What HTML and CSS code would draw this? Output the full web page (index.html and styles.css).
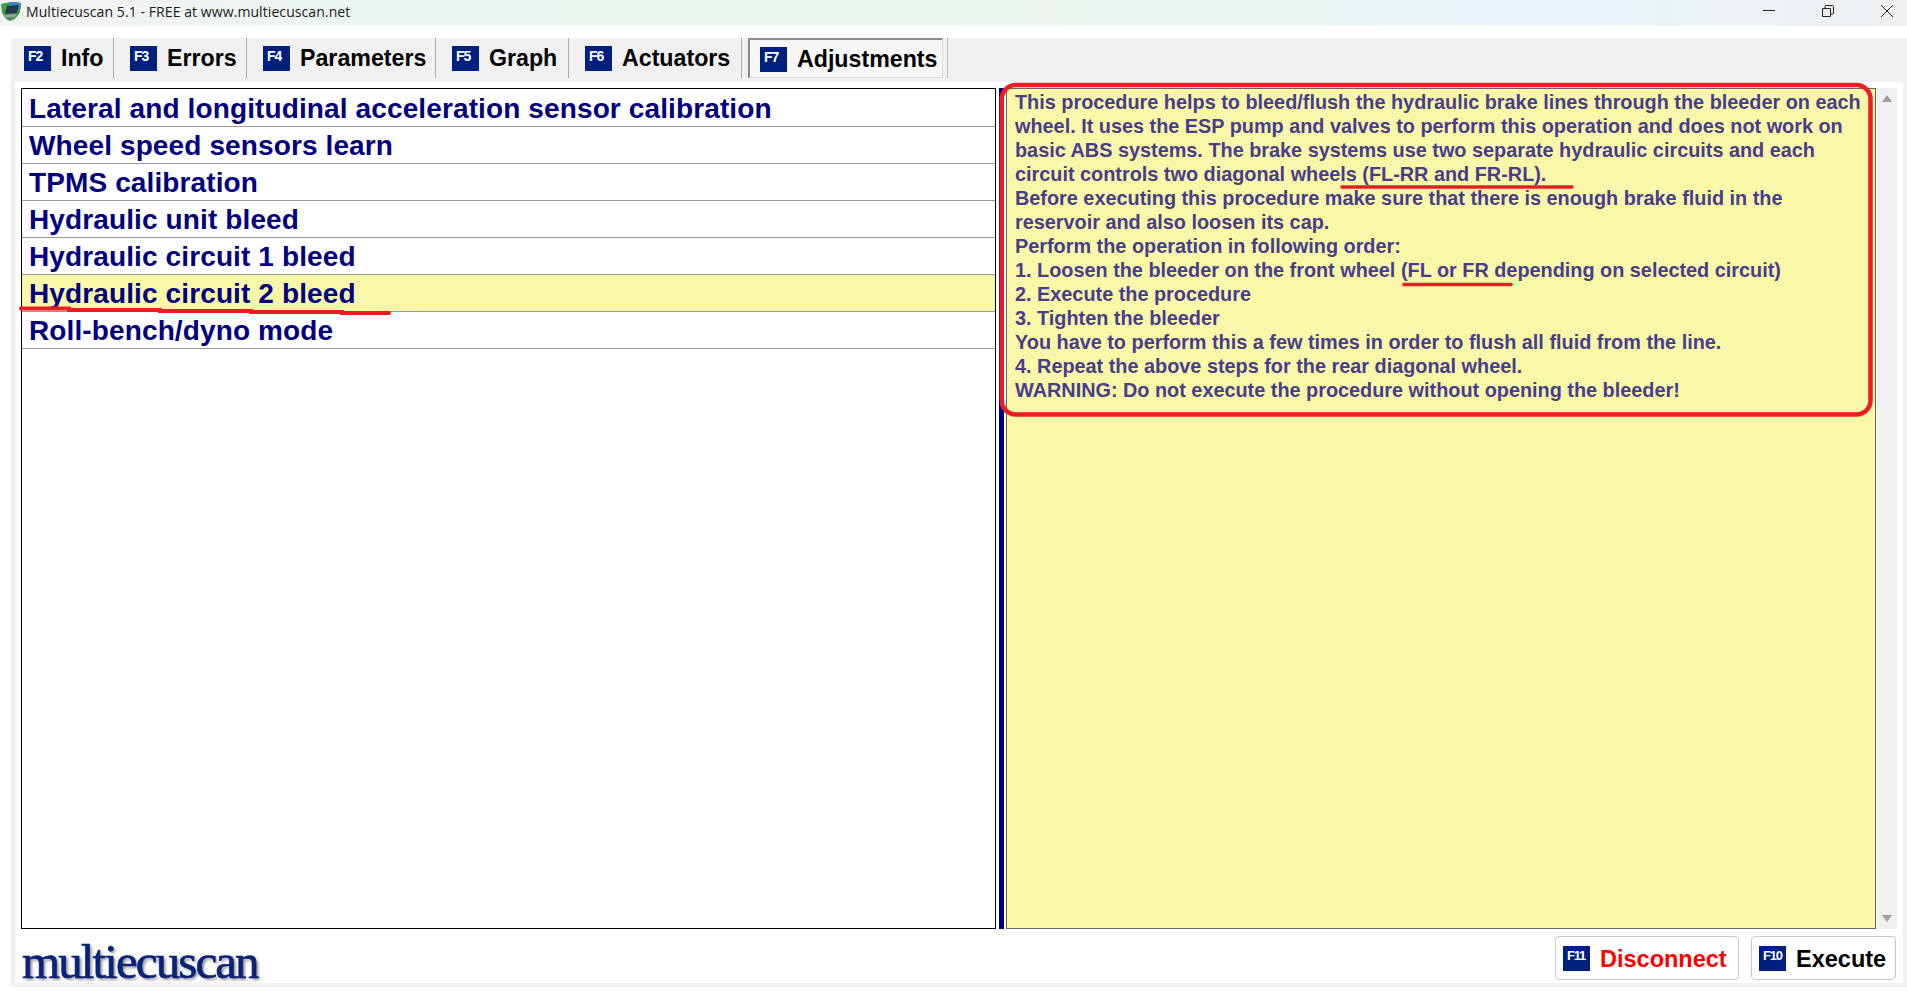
FILE: index.html
```html
<!DOCTYPE html>
<html lang="en">
<head>
<meta charset="utf-8">
<title>Multiecuscan 5.1 - FREE at www.multiecuscan.net</title>
<link rel="stylesheet" href="styles.css">
</head>
<body>
<header class="titlebar">
  <svg class="app-icon" viewBox="0 0 20 20" width="20" height="20">
    <path d="M0 3 Q9 0 20 2 L19 11 Q16 18 9 20 Q3 18 1 11Z" fill="#3f9b45"/>
    <path d="M8 1 Q15 0.500 20 2 L19.500 8 L10 8Z" fill="#3c86c8"/>
    <path d="M6 5 L18 4 L16 12 L4 13Z" fill="#27384a"/>
    <path d="M3 14 L16 13 L14 16 L3 16.500Z" fill="#9aa0a4"/>
  </svg>
  <span class="title-text">Multiecuscan 5.1 - FREE at www.multiecuscan.net</span>
  <div class="win-controls">
    <svg viewBox="0 0 14 14" width="14" height="14"><path d="M1 6.500H13" stroke="#222" stroke-width="1" fill="none"/></svg>
    <svg viewBox="0 0 14 14" width="14" height="14"><path d="M1.500 4.500H9.500V12.500H1.500Z M4 4.500V2.500Q4 1.500 5 1.500H11.500Q12.500 1.500 12.500 2.500V9Q12.500 10 11.500 10H9.500" stroke="#222" stroke-width="1" fill="none"/></svg>
    <svg viewBox="0 0 14 14" width="14" height="14"><path d="M1 1L13 13M13 1L1 13" stroke="#222" stroke-width="1" fill="none"/></svg>
  </div>
</header>

<div class="app">
  <nav class="tabs">
    <div class="tab tab-info"><span class="key">F2</span>Info</div>
    <div class="tab tab-errors"><span class="key">F3</span>Errors</div>
    <div class="tab tab-params"><span class="key">F4</span>Parameters</div>
    <div class="tab tab-graph"><span class="key">F5</span>Graph</div>
    <div class="tab tab-actuators"><span class="key">F6</span>Actuators</div>
    <div class="tab tab-active"><span class="key">F7</span>Adjustments</div>
    <div class="tab-end"></div>
  </nav>

  <main class="page">
    <section class="content">
      <ul class="list">
        <li>Lateral and longitudinal acceleration sensor calibration</li>
        <li>Wheel speed sensors learn</li>
        <li>TPMS calibration</li>
        <li>Hydraulic unit bleed</li>
        <li>Hydraulic circuit 1 bleed</li>
        <li class="selected">Hydraulic circuit 2 bleed</li>
        <li>Roll-bench/dyno mode</li>
      </ul>
      <div class="splitter"></div>
      <div class="description">
        This procedure helps to bleed/flush the hydraulic brake lines through the bleeder on each wheel. It uses the ESP pump and valves to perform this operation and does not work on basic ABS systems. The brake systems use two separate hydraulic circuits and each circuit controls two diagonal wheels (FL-RR and FR-RL).<br>
        Before executing this procedure make sure that there is enough brake fluid in the reservoir and also loosen its cap.<br>
        Perform the operation in following order:<br>
        1. Loosen the bleeder on the front wheel (FL or FR depending on selected circuit)<br>
        2. Execute the procedure<br>
        3. Tighten the bleeder<br>
        You have to perform this a few times in order to flush all fluid from the line.<br>
        4. Repeat the above steps for the rear diagonal wheel.<br>
        WARNING: Do not execute the procedure without opening the bleeder!
      </div>
      <div class="scrollbar">
        <span class="arrow arrow-up"></span>
        <span class="arrow arrow-down"></span>
      </div>
    </section>
    <footer class="footer">
      <div class="logo">multiecuscan</div>
      <div class="buttons">
        <div class="btn btn-disconnect"><span class="key">F11</span>Disconnect</div>
        <div class="btn btn-execute"><span class="key">F10</span>Execute</div>
      </div>
    </footer>
  </main>
</div>

<svg class="annotations" viewBox="0 0 1907 991" width="1907" height="991">
  <rect x="1001.750" y="85" width="868.750" height="329.500" rx="14" fill="none" stroke="#ed1c24" stroke-width="4.500"/>
  <path d="M21 308.500H69V310H160V311H251V312H342V313H389" fill="none" stroke="#ed1c24" stroke-width="4" stroke-linecap="round"/>
  <path d="M1342 187H1572" fill="none" stroke="#ed1c24" stroke-width="3.500" stroke-linecap="round"/>
  <path d="M1404 284.500H1511" fill="none" stroke="#ed1c24" stroke-width="3.500" stroke-linecap="round"/>
</svg>
</body>
</html>
```
FILE: styles.css
```css
* { box-sizing: border-box; }
html, body { margin: 0; padding: 0; }
body {
  width: 1907px;
  height: 991px;
  overflow: hidden;
  background: #fff;
  font-family: "Liberation Sans", Arial, sans-serif;
  position: relative;
}
.titlebar {
  height: 26px;
  display: flex;
  align-items: center;
  background: linear-gradient(90deg, #f2f3f2 0%, #e9f6ee 30%, #edf5ee 55%, #e9f3f8 80%, #eef0f2 100%);
  padding: 0 0 4px 1px;
}
.app-icon { margin-right: 5px; flex: none; }
.title-text {
  font-family: "Open Sans", "Noto Sans", sans-serif;
  font-size: 14px;
  letter-spacing: 0.08px;
  color: #1a1a1a;
}
.win-controls {
  margin-left: auto;
  display: flex;
  gap: 45px;
  padding-right: 13px;
}
.app {
  margin: 12px 0 4px 11px;
  height: 949px;
  background: #f0f0f0;
  display: flex;
  flex-direction: column;
}
.tabs {
  height: 44px;
  display: flex;
  align-items: flex-start;
  flex: none;
}
.tab {
  height: 40px;
  display: flex;
  align-items: center;
  font-size: 23.200px;
  font-weight: bold;
  color: #000;
  border-right: 1px solid #aaa;
  padding-left: 16px;
}
.key {
  width: 27px;
  height: 25px;
  background: #00207f;
  color: #fff;
  font-size: 14px;
  letter-spacing: -1px;
  font-weight: bold;
  padding: 3px 0 0 4px;
  line-height: 14px;
  flex: none;
  margin-right: 10px;
  white-space: nowrap;
  overflow: hidden;
}
.tab-info { width: 103px; padding-left: 13px; }
.tab-errors { width: 133px; }
.tab-params { width: 189px; }
.tab-graph { width: 133px; }
.tab-actuators { width: 173px; }
.tab-active {
  width: 195px;
  margin-left: 6px;
  padding: 2px 0 0 10px;
  border: 2px solid #8a8a8a;
  border-right: 1px solid #ddd;
  border-bottom: 1px solid #ddd;
  background: #f7f7f7;
}
.tab-end {
  width: 1px;
  height: 40px;
  margin-left: 4px;
  background: #bbb;
}
.page {
  flex: 1;
  margin: 0 4px 4px 4px;
  background: #fff;
  display: flex;
  flex-direction: column;
  min-height: 0;
}
.content {
  flex: 1;
  min-height: 0;
  display: flex;
  padding: 6px 6px 0 6px;
}
.list {
  list-style: none;
  margin: 0;
  padding: 1px 0 0;
  width: 975px;
  border: 1px solid #000;
  flex: none;
}
.list li {
  height: 37px;
  border-bottom: 1px solid #999;
  font-size: 28px;
  letter-spacing: 0.12px;
  font-weight: bold;
  color: #000080;
  line-height: 37px;
  padding-left: 7px;
  white-space: nowrap;
}
.list li.selected { background: #f9f7a8; }
.splitter {
  width: 5px;
  margin-left: 3px;
  background: #000080;
  flex: none;
}
.description {
  width: 870px;
  margin-left: 2px;
  flex: none;
  background: #f9f7a8;
  border: 1px solid #666;
  padding: 1px 4px 0 8px;
  font-size: 19.850px;
  line-height: 24px;
  font-weight: bold;
  color: #483d8b;
}
.scrollbar {
  width: 20px;
  margin-left: 1px;
  background: #f0f0f0;
  display: flex;
  flex-direction: column;
  justify-content: space-between;
  align-items: center;
  padding: 7px 0;
  flex: none;
}
.arrow {
  width: 0;
  height: 0;
  border-left: 5px solid transparent;
  border-right: 5px solid transparent;
}
.arrow-up { border-bottom: 7px solid #a0a0a0; }
.arrow-down { border-top: 7px solid #a0a0a0; }
.footer {
  height: 54px;
  flex: none;
  display: flex;
  justify-content: space-between;
  align-items: flex-start;
  padding: 7px 7px 0 7px;
}
.logo {
  font-family: "Liberation Serif", serif;
  font-size: 49px;
  line-height: 44px;
  padding-top: 4px;
  color: #0a2378;
  letter-spacing: -1.9px;
  -webkit-text-stroke: 0.7px #0a2378;
  text-shadow: 2px 2px 3px rgba(0, 0, 0, 0.45);
}
.buttons { display: flex; gap: 12px; }
.btn {
  height: 44px;
  display: flex;
  align-items: center;
  padding: 2px 0 0 7px;
  border: 1px solid #c8c8c8;
  border-radius: 4px;
  background: #fff;
  font-size: 23.500px;
  font-weight: bold;
}
.btn .key {
  font-size: 13px;
  letter-spacing: -1.200px;
  margin-top: -2px;
}
.btn-disconnect { width: 184px; color: #ff0000; }
.btn-execute { width: 145px; color: #000; }
.annotations {
  position: absolute;
  left: 0;
  top: 0;
  pointer-events: none;
}
```
